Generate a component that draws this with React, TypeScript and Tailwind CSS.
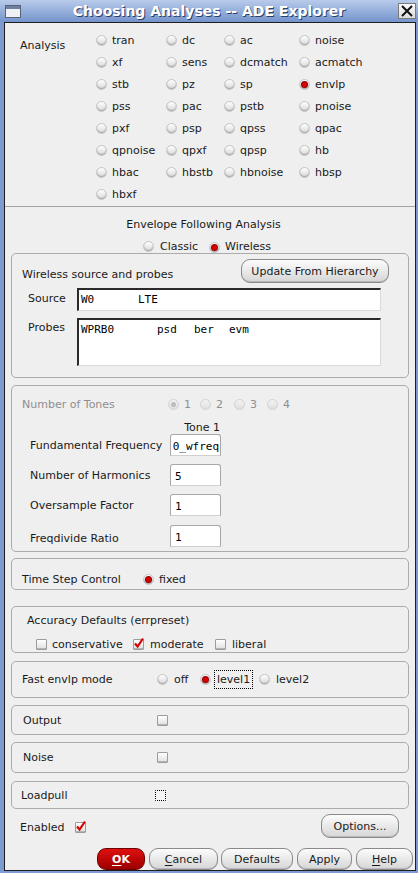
import React from "react";

const analyses: string[][] = [
  ["tran", "dc", "ac", "noise"],
  ["xf", "sens", "dcmatch", "acmatch"],
  ["stb", "pz", "sp", "envlp"],
  ["pss", "pac", "pstb", "pnoise"],
  ["pxf", "psp", "qpss", "qpac"],
  ["qpnoise", "qpxf", "qpsp", "hb"],
  ["hbac", "hbstb", "hbnoise", "hbsp"],
  ["hbxf"],
];

const Radio = ({ on = false, dim = false }: { on?: boolean; dim?: boolean }) => (
  <span
    className={`inline-flex h-[11px] w-[11px] shrink-0 items-center justify-center rounded-full border ${
      dim
        ? "border-[#d2d2d2] bg-gradient-to-b from-[#f4f4f4] to-[#dedede]"
        : "border-[#c4c4c4] bg-gradient-to-b from-white to-[#d8d8d8] shadow-[inset_0_-1px_1px_#a4a4a4]"
    }`}
  >
    {on && (
      <span
        className={`h-[5px] w-[5px] rounded-full ${
          dim ? "bg-[#bdbdbd]" : "bg-[#d80000] shadow-[0_0_0_1px_#900000]"
        }`}
      />
    )}
  </span>
);

const Check = ({ on = false, dotted = false }: { on?: boolean; dotted?: boolean }) => (
  <span
    className={`relative inline-block h-[11px] w-[11px] shrink-0 rounded-[1px] ${
      dotted
        ? "border border-dotted border-black bg-[#f4f4f4]"
        : "border border-[#9c9c9c] bg-gradient-to-b from-white to-[#e0e0e0] shadow-[inset_0_-1px_0_#b4b4b4]"
    }`}
  >
    {on && (
      <svg viewBox="0 0 12 12" className="absolute left-[-1px] top-[-3px] h-[12px] w-[12px]">
        <path d="M2 6.5 L4.6 9.5 L10 1.5" stroke="#d40000" strokeWidth="2.2" fill="none" />
      </svg>
    )}
  </span>
);

const Btn = ({
  children,
  className = "",
  red = false,
}: {
  children: React.ReactNode;
  className?: string;
  red?: boolean;
}) => (
  <button
    className={`flex items-center justify-center rounded-[9px] border text-[11px] ${
      red
        ? "border-[#6e0000] bg-gradient-to-b from-[#e01010] to-[#9c0000] font-bold text-white"
        : "border-[#8a8a8a] bg-gradient-to-b from-[#fcfcfc] to-[#d6d6d6] text-[#1a1a1a] shadow-[inset_0_-1px_0_#b8b8b8]"
    } ${className}`}
  >
    {children}
  </button>
);

const Group = ({ className = "", children }: { className?: string; children: React.ReactNode }) => (
  <div className={`mx-[6px] overflow-hidden rounded-[5px] border border-[#ababab] ${className}`}>
    {children}
  </div>
);

const SmallInput = ({ value, right = false }: { value: string; right?: boolean }) => (
  <div
    className={`flex h-[22px] w-[51px] overflow-hidden rounded-t-[3px] border border-[#a8a8a8] border-b-[#d0d0d0] bg-white pt-[5px] font-['DejaVu_Sans_Mono',monospace] text-[11px] leading-[13px] text-black ${
      right ? "justify-end pr-[1px]" : "pl-[4px]"
    }`}
  >
    <span className="whitespace-pre">{value}</span>
  </div>
);

const App: React.FC = () => {
  return (
    <div className="flex h-[873px] w-[418px] flex-col bg-[#7d9bd1] font-['DejaVu_Sans',sans-serif] text-[11px] leading-[13px] text-[#1a1a1a]">
      {/* title bar */}
      <div className="grid h-[22px] shrink-0 grid-cols-[1fr_auto_1fr] items-center bg-gradient-to-b from-[#b8cbea] to-[#7494cc]">
        <div className="pl-[5px]">
          <svg width="16" height="13" viewBox="0 0 16 13">
            <rect x="0.5" y="0.5" width="15" height="12" fill="#eef0f4" stroke="#5a6478" />
            <rect x="1" y="1" width="14" height="3" fill="#6d7fa3" />
          </svg>
        </div>
        <div className="text-[14px] font-bold leading-[16px] text-white [text-shadow:1px_1px_0_#2e4068]">
          Choosing Analyses -- ADE Explorer
        </div>
        <div className="flex justify-end pr-[2px]">
          <div className="flex h-[16px] w-[18px] items-center justify-center border border-[#7a7a7a] bg-gradient-to-b from-[#fafafa] to-[#dcdcdc]">
            <svg width="12" height="12" viewBox="0 0 12 12">
              <path d="M1 1 L11 11 M11 1 L1 11" stroke="#111" strokeWidth="2" />
            </svg>
          </div>
        </div>
      </div>

      {/* dialog body */}
      <div className="ml-[4px] mr-[2px] flex h-[849px] shrink-0 flex-col border border-[#1e1e1e] bg-[#efefef]">
        {/* analysis chooser */}
        <div className="flex h-[183px] pt-[6px]">
          <div className="w-[91px] pl-[15px] pt-[10px]">Analysis</div>
          <div className="grid grid-cols-[70px_58px_75px_1fr] auto-rows-[22px]">
            {analyses.flat().map((a) => (
              <div key={a} className="flex items-center gap-[5px]">
                <Radio on={a === "envlp"} />
                <span>{a}</span>
              </div>
            ))}
          </div>
        </div>
        <div className="h-px bg-[#a3a3a3]" />

        <div className="mt-[8px] flex h-[18px] items-center justify-center pr-[13px]">
          Envelope Following Analysis
        </div>
        <div className="mt-[6px] flex h-[14px] items-center justify-center pr-[6px]">
          <Radio />
          <span className="ml-[6px]">Classic</span>
          <span className="ml-[11px]">
            <Radio on />
          </span>
          <span className="ml-[5px]">Wireless</span>
        </div>

        {/* wireless source and probes */}
        <Group className="h-[125px] shrink-0">
          <div className="mt-[5px] flex h-[23px] items-start justify-between pl-[10px] pr-[19px]">
            <span className="mt-[9px]">Wireless source and probes</span>
            <Btn className="h-[24px] w-[148px]">Update From Hierarchy</Btn>
          </div>
          <div className="mt-[6px] flex items-start">
            <div className="w-[65px] pl-[16px] pt-[4px]">Source</div>
            <div className="flex h-[23px] w-[304px] border-b border-l-2 border-r border-t-2 border-b-[#dadada] border-l-[#2a2a2a] border-r-[#dadada] border-t-[#2a2a2a] bg-white pl-[2px] pt-[3px] font-['DejaVu_Sans_Mono',monospace] text-[11px] leading-[14px] text-black">
              <span className="w-[57px]">W0</span>
              <span>LTE</span>
            </div>
          </div>
          <div className="mt-[7px] flex items-start">
            <div className="w-[65px] pl-[16px] pt-[3px]">Probes</div>
            <div className="flex h-[48px] w-[304px] items-start border-b border-l-2 border-r border-t-2 border-b-[#dadada] border-l-[#2a2a2a] border-r-[#dadada] border-t-[#2a2a2a] bg-white pl-[2px] pt-[3px] font-['DejaVu_Sans_Mono',monospace] text-[11px] leading-[14px] text-black">
              <span className="w-[76px]">WPRB0</span>
              <span className="w-[37px]">psd</span>
              <span className="w-[35px]">ber</span>
              <span>evm</span>
            </div>
          </div>
        </Group>

        {/* tones */}
        <Group className="mt-[7px] h-[167px] shrink-0">
          <div className="mt-[11px] flex h-[14px] items-center text-[#8e8e8e]">
            <div className="w-[156px] pl-[10px]">Number of Tones</div>
            <div className="flex w-[32px] items-center gap-[5px]">
              <Radio on dim />
              <span>1</span>
            </div>
            <div className="flex w-[34px] items-center gap-[5px]">
              <Radio dim />
              <span>2</span>
            </div>
            <div className="flex w-[33px] items-center gap-[5px]">
              <Radio dim />
              <span>3</span>
            </div>
            <div className="flex items-center gap-[5px]">
              <Radio dim />
              <span>4</span>
            </div>
          </div>
          <div className="mt-[10px] flex h-[13px] items-end">
            <div className="w-[158px]" />
            <div className="w-[51px] pr-[1px] text-right">Tone 1</div>
          </div>
          <div className="flex items-center">
            <div className="w-[158px] pl-[18px]">Fundamental Frequency</div>
            <SmallInput value="0_wfreq" right />
          </div>
          <div className="mt-[8px] flex items-center">
            <div className="w-[158px] pl-[18px]">Number of Harmonics</div>
            <SmallInput value="5" />
          </div>
          <div className="mt-[8px] flex items-center">
            <div className="w-[158px] pl-[18px]">Oversample Factor</div>
            <SmallInput value="1" />
          </div>
          <div className="mt-[9px] flex items-center">
            <div className="w-[158px] pl-[18px] pt-[4px]">Freqdivide Ratio</div>
            <SmallInput value="1" />
          </div>
        </Group>

        {/* time step */}
        <Group className="mt-[6px] h-[32px] shrink-0">
          <div className="mt-[13px] flex h-[14px] items-center">
            <div className="w-[131px] pl-[10px]">Time Step Control</div>
            <Radio on />
            <span className="ml-[5px]">fixed</span>
          </div>
        </Group>

        {/* accuracy */}
        <Group className="mt-[16px] h-[47px] shrink-0">
          <div className="mt-[7px] h-[14px] pl-[15px] leading-[14px]">Accuracy Defaults (errpreset)</div>
          <div className="mt-[9px] flex h-[14px] items-center pl-[24px]">
            <div className="flex w-[97px] items-center gap-[5px]">
              <Check />
              <span>conservative</span>
            </div>
            <div className="flex w-[82px] items-center gap-[6px]">
              <Check on />
              <span>moderate</span>
            </div>
            <div className="flex items-center gap-[6px]">
              <Check />
              <span>liberal</span>
            </div>
          </div>
        </Group>

        {/* fast envlp */}
        <Group className="mt-[8px] flex h-[37px] shrink-0 items-center">
          <div className="w-[145px] pl-[10px]">Fast envlp mode</div>
          <div className="flex w-[43px] items-center gap-[6px]">
            <Radio />
            <span>off</span>
          </div>
          <div className="flex w-[59px] items-center">
            <Radio on />
            <span className="ml-[3px] border border-dotted border-black px-[2px] py-[2px]">level1</span>
          </div>
          <div className="flex items-center gap-[6px]">
            <Radio />
            <span>level2</span>
          </div>
        </Group>

        <Group className="mt-[7px] flex h-[30px] shrink-0 items-center">
          <div className="w-[145px] pl-[11px]">Output</div>
          <Check />
        </Group>
        <Group className="mt-[7px] flex h-[31px] shrink-0 items-center">
          <div className="w-[145px] pl-[11px]">Noise</div>
          <Check />
        </Group>
        <Group className="mt-[8px] flex h-[28px] shrink-0 items-center">
          <div className="w-[143px] pl-[9px]">Loadpull</div>
          <Check dotted />
        </Group>

        <div className="mt-[5px] flex h-[24px] shrink-0 items-center justify-between">
          <div className="flex items-center pt-[3px]">
            <div className="w-[70px] pl-[15px]">Enabled</div>
            <Check on />
          </div>
          <Btn className="mr-[16px] h-[24px] w-[78px]">Options...</Btn>
        </div>

        <div className="mt-[10px] flex h-[22px] shrink-0 justify-end gap-[3px] pr-[2px]">
          <Btn red className="w-[48px]">
            <span className="underline underline-offset-2">O</span>K
          </Btn>
          <Btn className="ml-[1px] w-[69px]">
            <span className="underline underline-offset-2">C</span>ancel
          </Btn>
          <Btn className="w-[72px]">Defaults</Btn>
          <Btn className="ml-[1px] w-[55px]">Apply</Btn>
          <Btn className="ml-[1px] w-[57px]">
            <span className="underline underline-offset-2">H</span>elp
          </Btn>
        </div>
      </div>
    </div>
  );
};

export default App;
